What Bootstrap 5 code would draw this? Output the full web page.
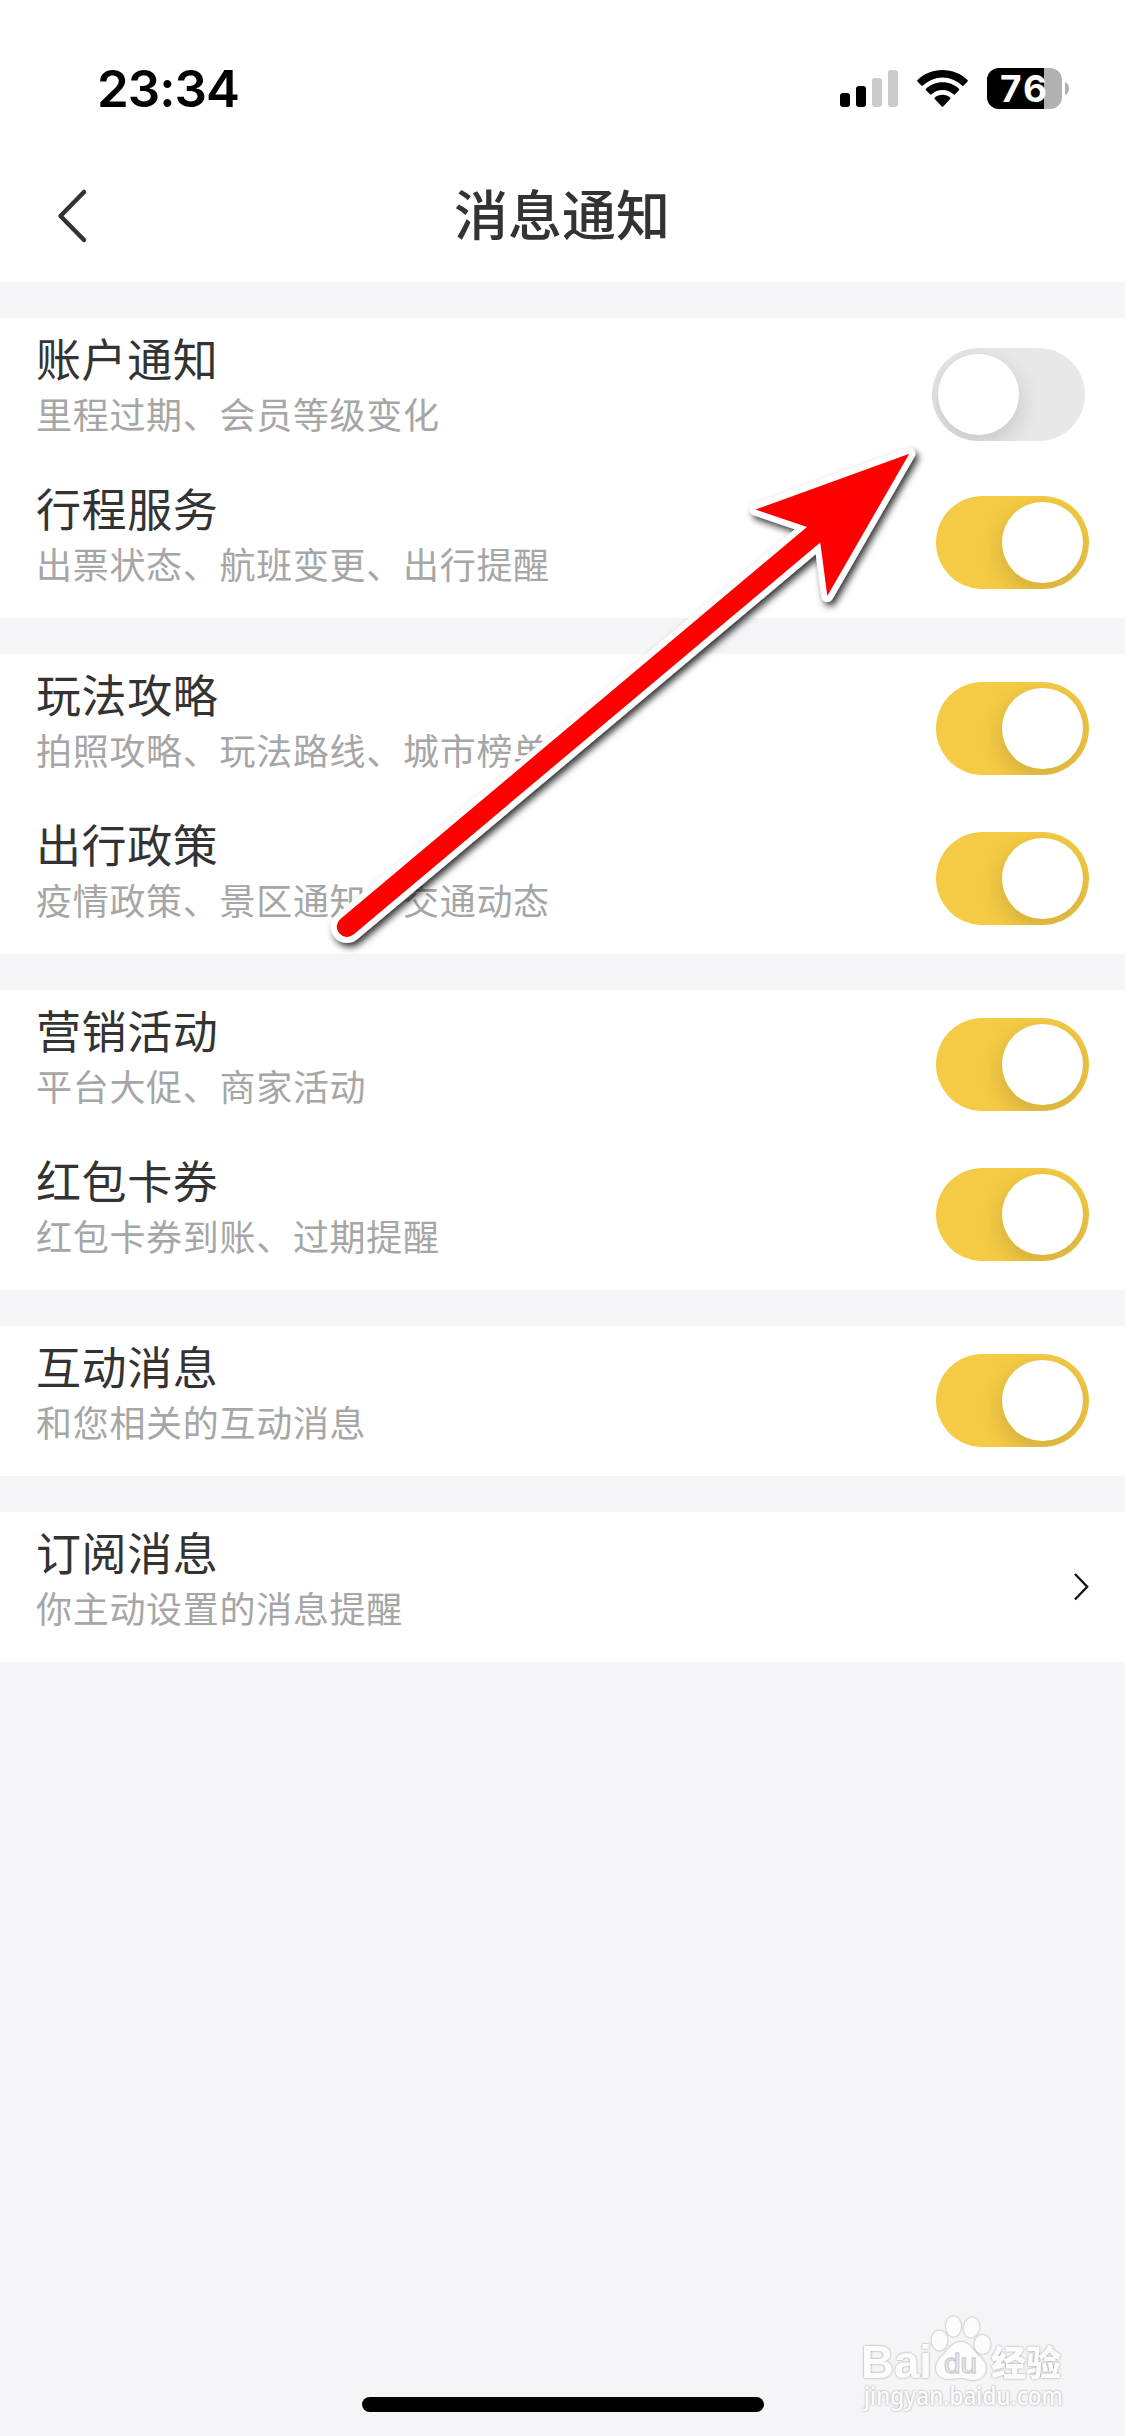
<!DOCTYPE html>
<html lang="zh-CN">
<head>
<meta charset="utf-8">
<meta name="viewport" content="width=device-width, initial-scale=1">
<title>消息通知</title>
<link href="https://cdn.jsdelivr.net/npm/bootstrap@5.3.0/dist/css/bootstrap.min.css" rel="stylesheet">
<style>
body{background:#f5f5f8;font-family:"Noto Sans CJK SC",sans-serif;color:#333;width:1125px;height:2436px;overflow:hidden}
.status-bar{height:132px;padding:60px 55px 0 97px}
.clock{font:600 51px/58px Inter,sans-serif;color:#000;letter-spacing:-1px}
.nav-top{height:150px;padding:18px 55px 0}
.page-title{font-size:54px;line-height:80px;font-weight:500;margin-bottom:7px}
.group-list{gap:36px;padding-top:36px}
.setting{height:150px;padding:0 36px}
.setting-name{font-size:45px;line-height:60px;letter-spacing:.6px;padding-top:10px}
.setting-desc{font-size:36px;line-height:51px;letter-spacing:.7px;color:#a6a6a6}
.form-switch .toggle-input{width:153px;height:93px;margin:0 0 1px;border:0;border-radius:47px;background:#e8e8e8;display:block;float:none;position:relative;overflow:hidden;box-shadow:none}
.toggle-input::after{content:"";position:absolute;width:81px;height:81px;left:6px;top:6px;border-radius:50%;background:#fff;box-shadow:0 8px 24px rgba(0,0,0,.16)}
.form-switch .toggle-input:checked{background:#f5cb45}
.toggle-input:checked::after{left:66px}
.form-switch .toggle-input.toggle-off{margin:3px 4px 0 0}
.home-bar{position:absolute;left:362px;top:2397px;width:402px;height:15px;border-radius:8px;background:#000}
.overlay{position:absolute;left:0;top:0;pointer-events:none}
</style>
</head>
<body class="position-relative">
<header class="bg-white">
  <div class="status-bar d-flex justify-content-between align-items-start">
    <span class="clock">23:34</span>
    <svg width="230" height="50" viewBox="840 60 230 50">
      <rect x="840" y="93" width="10" height="14" rx="3"/><rect x="856" y="86" width="10" height="21" rx="3"/>
      <g fill="#cbcbcb"><rect x="872" y="78" width="10" height="29" rx="3"/><rect x="888" y="70" width="10" height="37" rx="3"/></g>
      <path d="M942.5 70c9.800 0 18.500 3.700 25 10a1 1 0 0 1 0 1.500l-3.800 4a1 1 0 0 1-1.500 0a28.500 28.500 0 0 0-39.400 0a1 1 0 0 1-1.500 0l-3.800-4a1 1 0 0 1 0-1.500c6.500-6.300 15.200-10 25-10z"/>
      <path d="M942.5 82.300c6.400 0 12.200 2.400 16.500 6.500a1 1 0 0 1 0 1.500l-4 4a1 1 0 0 1-1.500 0a16.200 16.200 0 0 0-22 0a1 1 0 0 1-1.500 0l-4-4a1 1 0 0 1 0-1.500c4.300-4.100 10.100-6.500 16.500-6.500z"/>
      <path d="M942.500 94.800c3 0 5.600 1 7.700 2.700a1 1 0 0 1 0 1.500l-7 7.500a1 1 0 0 1-1.400 0l-7-7.500a1 1 0 0 1 0-1.500c2.100-1.700 4.700-2.700 7.700-2.700z"/>
      <clipPath id="cell"><rect x="987" y="68" width="75" height="41" rx="12"/></clipPath>
      <g clip-path="url(#cell)"><rect x="987" y="68" width="75" height="41" fill="#b1b1b1"/><rect x="987" y="68" width="57" height="41"/></g>
      <path d="M1065 82c5.300 2 5.300 11 0 13z" fill="#b1b1b1"/>
      <text x="1023.500" y="102" text-anchor="middle" font-family="Inter,sans-serif" font-weight="700" font-size="37" fill="#fff" textLength="47">76</text>
    </svg>
  </div>
  <nav class="nav-top d-flex align-items-center justify-content-between">
    <svg width="34" height="60" viewBox="55 186 34 60" fill="none" stroke="#333" stroke-width="4.500" stroke-linecap="round" stroke-linejoin="round"><path d="M84 192L60.500 216L84 240"/></svg>
    <h1 class="page-title">消息通知</h1>
    <span style="width:35px"></span>
  </nav>
</header>
<main class="group-list d-flex flex-column">
  <section class="bg-white">
    <div class="setting d-flex justify-content-between align-items-center">
      <div class="align-self-start"><div class="setting-name">账户通知</div><div class="setting-desc">里程过期、会员等级变化</div></div>
      <div class="form-switch p-0 m-0"><input class="form-check-input toggle-input toggle-off" type="checkbox" role="switch"></div>
    </div>
    <div class="setting d-flex justify-content-between align-items-center">
      <div class="align-self-start"><div class="setting-name">行程服务</div><div class="setting-desc">出票状态、航班变更、出行提醒</div></div>
      <div class="form-switch p-0 m-0"><input class="form-check-input toggle-input" type="checkbox" role="switch" checked></div>
    </div>
  </section>
  <section class="bg-white">
    <div class="setting d-flex justify-content-between align-items-center">
      <div class="align-self-start"><div class="setting-name">玩法攻略</div><div class="setting-desc">拍照攻略、玩法路线、城市榜单</div></div>
      <div class="form-switch p-0 m-0"><input class="form-check-input toggle-input" type="checkbox" role="switch" checked></div>
    </div>
    <div class="setting d-flex justify-content-between align-items-center">
      <div class="align-self-start"><div class="setting-name">出行政策</div><div class="setting-desc">疫情政策、景区通知、交通动态</div></div>
      <div class="form-switch p-0 m-0"><input class="form-check-input toggle-input" type="checkbox" role="switch" checked></div>
    </div>
  </section>
  <section class="bg-white">
    <div class="setting d-flex justify-content-between align-items-center">
      <div class="align-self-start"><div class="setting-name">营销活动</div><div class="setting-desc">平台大促、商家活动</div></div>
      <div class="form-switch p-0 m-0"><input class="form-check-input toggle-input" type="checkbox" role="switch" checked></div>
    </div>
    <div class="setting d-flex justify-content-between align-items-center">
      <div class="align-self-start"><div class="setting-name">红包卡券</div><div class="setting-desc">红包卡券到账、过期提醒</div></div>
      <div class="form-switch p-0 m-0"><input class="form-check-input toggle-input" type="checkbox" role="switch" checked></div>
    </div>
  </section>
  <section class="bg-white">
    <div class="setting d-flex justify-content-between align-items-center">
      <div class="align-self-start"><div class="setting-name">互动消息</div><div class="setting-desc">和您相关的互动消息</div></div>
      <div class="form-switch p-0 m-0"><input class="form-check-input toggle-input" type="checkbox" role="switch" checked></div>
    </div>
  </section>
  <section class="bg-white">
    <div class="setting d-flex justify-content-between align-items-center">
      <div class="align-self-start"><div class="setting-name">订阅消息</div><div class="setting-desc">你主动设置的消息提醒</div></div>
      <svg width="16" height="30" viewBox="0 0 16 30" fill="none" stroke="#111" stroke-width="2.300"><path d="M2 2L14.200 14.700L2 27.500"/></svg>
    </div>
  </section>
</main>
<svg class="overlay" width="1125" height="2436" viewBox="0 0 1125 2436">
  <defs>
    <filter id="drop" x="-10%" y="-10%" width="120%" height="120%"><feDropShadow dx="3" dy="4" stdDeviation="3.500" flood-color="#000" flood-opacity=".8"/></filter>
    <filter id="rim" x="-10%" y="-20%" width="120%" height="140%"><feDropShadow dx="0" dy="0" stdDeviation="1.200" flood-color="#888" flood-opacity=".9"/></filter>
  </defs>
  <g filter="url(#drop)"><path d="M909.300 453.700L755.500 509.500L807 527L340.400 918.900A10.200 10.200 0 0 0 353.600 934.500L820.300 542.500L827.300 596Z" fill="#fff" stroke="#fff" stroke-width="12" stroke-linejoin="round"/></g>
  <path d="M909.300 453.700L755.500 509.500L807 527L340.400 918.900A10.200 10.200 0 0 0 353.600 934.500L820.300 542.500L827.300 596Z" fill="#f00"/>
  <g fill="#fcfcfd" filter="url(#rim)" font-family="'Liberation Sans',sans-serif">
    <text x="861" y="2378" font-size="46" font-weight="700" textLength="71" lengthAdjust="spacingAndGlyphs">Bai</text>
    <ellipse cx="939.500" cy="2340.500" rx="8" ry="10"/><ellipse cx="953.500" cy="2326.500" rx="7.500" ry="10.300"/><ellipse cx="971.500" cy="2327.500" rx="7.800" ry="10" transform="rotate(12 971.500 2327.500)"/><ellipse cx="982.500" cy="2344.500" rx="8" ry="9.500"/>
    <path d="M961 2342c-8 0-12 6-16 11s-9 8-9 15c0 7 6 11 12 11c5 0 8-1 13-1s7 2 12 2c8 0 13-5 13-12c0-6-5-10-9-14c-5-5-8-12-16-12z"/>
    <text x="991" y="2376" font-size="35" font-weight="900" font-family="'Noto Sans CJK SC',sans-serif" textLength="70">经验</text>
    <text x="864" y="2405" font-size="25" font-weight="500" font-family="'Noto Sans',sans-serif" textLength="199" lengthAdjust="spacingAndGlyphs">jingyan.baidu.com</text>
  </g>
  <text x="944" y="2373" font-size="28" font-family="'Liberation Sans',sans-serif" textLength="33" lengthAdjust="spacingAndGlyphs" fill="#f5f5f8" stroke="#ccc" stroke-width="1.300">du</text>
</svg>
<div class="home-bar"></div>
<script src="https://cdn.jsdelivr.net/npm/bootstrap@5.3.0/dist/js/bootstrap.bundle.min.js"></script>
</body>
</html>
